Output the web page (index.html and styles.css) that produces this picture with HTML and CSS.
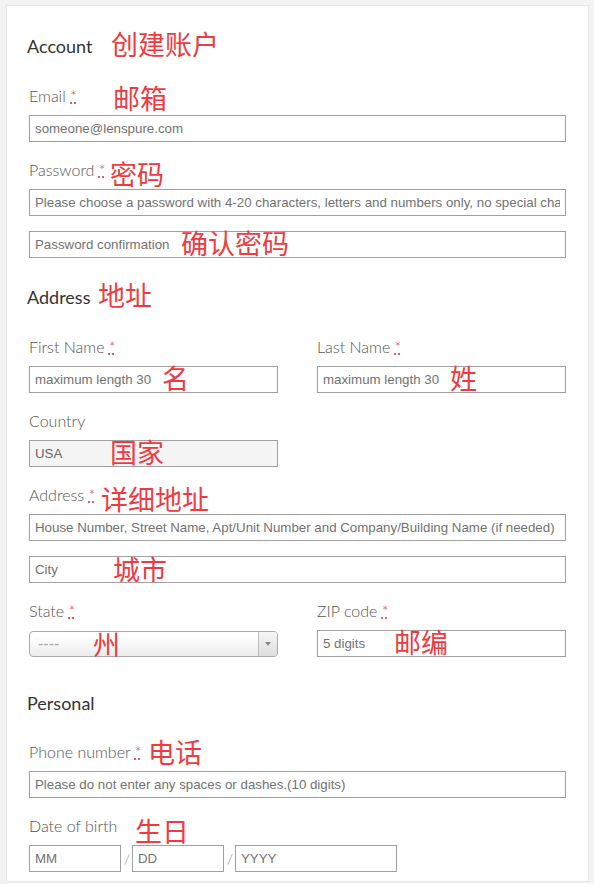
FILE: index.html
```html
<!DOCTYPE html>
<html lang="en">
<head>
    <meta charset="UTF-8">
    <meta name="viewport" content="width=device-width, initial-scale=1.0">
    <title>Create Account</title>
    <link rel="stylesheet" href="styles.css">
</head>
<body>
    <form class="card">
        <section class="section">
            <h2 class="section-title">Account <span class="note note-account">创建账户</span></h2>
            <div class="section-body">
                <div class="field">
                    <label class="label">Email <abbr title="required">*</abbr></label>
                    <span class="note note-email">邮箱</span>
                    <div class="control">
                        <input class="input" type="email" placeholder="someone@lenspure.com">
                    </div>
                </div>
                <div class="field">
                    <label class="label">Password <abbr title="required">*</abbr></label>
                    <span class="note note-password">密码</span>
                    <div class="control">
                        <input class="input" type="password" placeholder="Please choose a password with 4-20 characters, letters and numbers only, no special characters">
                    </div>
                    <div class="control">
                        <input class="input" type="password" placeholder="Password confirmation">
                        <span class="note note-confirm">确认密码</span>
                    </div>
                </div>
            </div>
        </section>

        <section class="section">
            <h2 class="section-title">Address <span class="note note-address">地址</span></h2>
            <div class="section-body">
                <div class="row">
                    <div class="field">
                        <label class="label">First Name <abbr title="required">*</abbr></label>
                        <div class="control">
                            <input class="input" type="text" placeholder="maximum length 30">
                            <span class="note note-name">名</span>
                        </div>
                    </div>
                    <div class="field">
                        <label class="label">Last Name <abbr title="required">*</abbr></label>
                        <div class="control">
                            <input class="input" type="text" placeholder="maximum length 30">
                            <span class="note note-name">姓</span>
                        </div>
                    </div>
                </div>
                <div class="row">
                    <div class="field">
                        <label class="label">Country</label>
                        <div class="control">
                            <input class="input input-disabled" type="text" value="USA" disabled>
                            <span class="note note-country">国家</span>
                        </div>
                    </div>
                </div>
                <div class="field">
                    <label class="label">Address <abbr title="required">*</abbr></label>
                    <span class="note note-street">详细地址</span>
                    <div class="control">
                        <input class="input" type="text" placeholder="House Number, Street Name, Apt/Unit Number and Company/Building Name (if needed)">
                    </div>
                    <div class="control">
                        <input class="input" type="text" placeholder="City">
                        <span class="note note-city">城市</span>
                    </div>
                </div>
                <div class="row">
                    <div class="field">
                        <label class="label">State <abbr title="required">*</abbr></label>
                        <div class="control select">
                            <span class="select-value">----</span>
                            <span class="select-arrow"></span>
                            <span class="note note-state">州</span>
                        </div>
                    </div>
                    <div class="field">
                        <label class="label">ZIP code <abbr title="required">*</abbr></label>
                        <div class="control">
                            <input class="input" type="text" placeholder="5 digits">
                            <span class="note note-zip">邮编</span>
                        </div>
                    </div>
                </div>
            </div>
        </section>

        <section class="section personal">
            <h2 class="section-title">Personal</h2>
            <div class="section-body">
                <div class="field">
                    <label class="label">Phone number <abbr title="required">*</abbr></label>
                    <span class="note note-phone">电话</span>
                    <div class="control">
                        <input class="input" type="tel" placeholder="Please do not enter any spaces or dashes.(10 digits)">
                    </div>
                </div>
                <div class="field">
                    <label class="label">Date of birth</label>
                    <span class="note note-birth">生日</span>
                    <div class="date-row">
                        <input class="input date-short" type="text" placeholder="MM">
                        <span class="date-sep">/</span>
                        <input class="input date-short" type="text" placeholder="DD">
                        <span class="date-sep">/</span>
                        <input class="input date-year" type="text" placeholder="YYYY">
                    </div>
                </div>
            </div>
        </section>
    </form>
</body>
</html>
```

FILE: styles.css
```css
body {
    margin: 0;
    background-color: #f3f3f3;
    font-family: Lato, "Open Sans", sans-serif;
}
.card {
    margin: 5px 5px 0 6px;
    padding: 28px 22px 9px 20px;
    background: white;
    border: 1px solid #e6e6e6;
}
.section + .section {
    margin-top: 27px;
}
.section + .section.personal {
    margin-top: 34px;
}
.section-title {
    position: relative;
    margin: 0 0 28px;
    font-size: 18px;
    line-height: 24px;
    font-weight: 400;
    color: #333;
}
.personal .section-title {
    margin-bottom: 27px;
}
.section-body {
    display: flex;
    flex-direction: column;
    gap: 18px;
    padding-left: 2px;
}
.row {
    display: grid;
    grid-template-columns: 1fr 1fr;
    column-gap: 39px;
}
.field {
    position: relative;
    display: flex;
    flex-direction: column;
}
.label {
    margin-bottom: 9px;
    font-size: 16px;
    line-height: 20px;
    font-weight: 300;
    color: #555;
}
abbr {
    color: #d9344a;
    text-decoration: underline dotted;
    cursor: help;
}
.control {
    position: relative;
}
.control + .control {
    margin-top: 15px;
}
.input {
    display: block;
    box-sizing: border-box;
    width: 100%;
    height: 27px;
    margin: 0;
    padding: 0 5px;
    border: 1px solid #a0a0a0;
    border-radius: 0;
    background: white;
    font-family: "Liberation Sans", Arial, sans-serif;
    font-size: 13.3px;
    color: #666;
    outline: none;
}
.input::placeholder {
    color: #727272;
}
.input-disabled {
    background: #f4f4f4;
    color: #666;
}

/* select box */
.select {
    display: flex;
    box-sizing: border-box;
    height: 26px;
    margin-top: 1px;
    border: 1px solid #aaa;
    border-radius: 4px;
    background: linear-gradient(#fff 20%, #ececec);
}
.select-value {
    flex: 1;
    padding-left: 8px;
    font-family: "Liberation Sans", Arial, sans-serif;
    font-size: 16px;
    line-height: 24px;
    color: #aaa;
}
.select-arrow {
    position: relative;
    width: 18px;
    border-left: 1px solid #bbb;
    border-radius: 0 3px 3px 0;
    background: linear-gradient(#f6f6f6, #dedede);
}
.select-arrow::after {
    content: "";
    position: absolute;
    left: 6px;
    top: 10px;
    border-left: 3px solid transparent;
    border-right: 3px solid transparent;
    border-top: 4px solid #888;
}

/* date of birth */
.date-row {
    display: flex;
    align-items: center;
    gap: 3px;
}
.date-short {
    width: 92px;
}
.date-year {
    width: 162px;
}
.date-sep {
    width: 5px;
    font-size: 14px;
    font-weight: 300;
    color: #888;
}

/* red annotations over the form */
.note {
    position: absolute;
    font-family: "Noto Sans CJK SC", sans-serif;
    font-size: 27px;
    line-height: 27px;
    font-weight: 400;
    color: #ef3b3f;
    white-space: nowrap;
    pointer-events: none;
}
.note-account { left: 84px; top: -4px; }
.note-address { left: 71px; top: -4px; }
.note-email { left: 84px; top: -2px; }
.note-password { left: 81px; top: 0; }
.note-confirm { left: 152px; top: -2px; }
.note-name { left: 133px; top: -2px; }
.note-country { left: 81px; top: -2px; }
.note-street { left: 72px; top: 0; }
.note-city { left: 84px; top: -1px; }
.note-state { left: 63px; top: -2px; }
.note-zip { left: 77px; top: -2px; }
.note-phone { left: 119px; top: -4px; }
.note-birth { left: 106px; top: 1px; }
```
